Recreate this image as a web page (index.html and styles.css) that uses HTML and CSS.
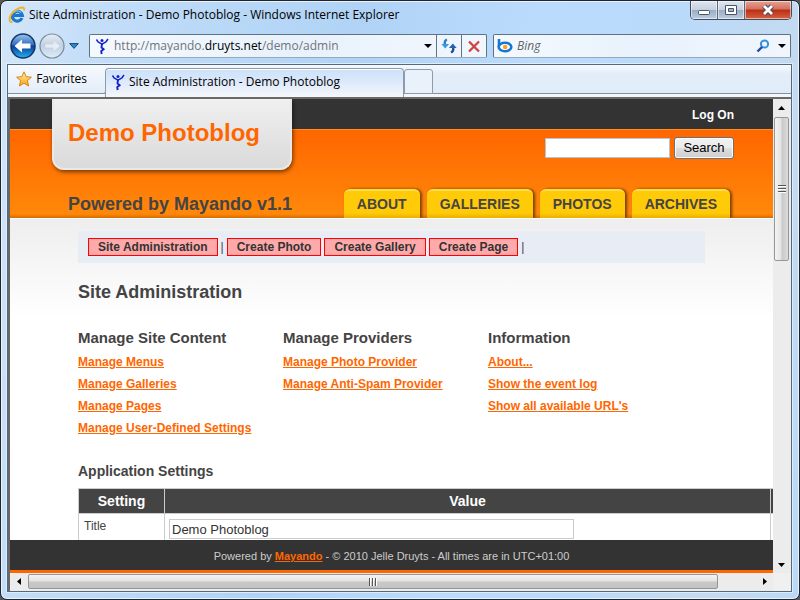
FILE: index.html
```html
<!DOCTYPE html>
<html lang="en">
<head>
<meta charset="utf-8">
<title>Site Administration - Demo Photoblog</title>
<link rel="stylesheet" href="styles.css">
</head>
<body>
<svg class="defs" aria-hidden="true">
  <defs>
    <symbol id="figure" viewBox="0 0 16 18">
      <circle cx="8" cy="3.600" r="1.500" fill="#1122cc"/>
      <path d="M2.500 2.500 L4 4.800 L8 7.200 L12 4.800 L14 2" fill="none" stroke="#1122cc" stroke-width="1.500" stroke-linejoin="round"/>
      <path d="M8 6.500 L7.500 10.500 L9.800 12.300 L7.200 14 L7.700 17" fill="none" stroke="#1122cc" stroke-width="1.900" stroke-linejoin="round"/>
    </symbol>
    <linearGradient id="orb" x1="0" y1="0" x2="0" y2="1">
      <stop offset="0" stop-color="#9cc6ee"/><stop offset=".45" stop-color="#2b6fc4"/><stop offset=".5" stop-color="#0a3b98"/><stop offset="1" stop-color="#25b4f2"/>
    </linearGradient>
    <linearGradient id="orb-off" x1="0" y1="0" x2="0" y2="1">
      <stop offset="0" stop-color="#e6eef7"/><stop offset=".5" stop-color="#bfd0e2"/><stop offset="1" stop-color="#dfeefa"/>
    </linearGradient>
    <linearGradient id="gold" x1="0" y1="0" x2="0" y2="1">
      <stop offset="0" stop-color="#fff3a0"/><stop offset="1" stop-color="#f9a01b"/>
    </linearGradient>
  </defs>
</svg>
<div class="window">
  <header class="titlebar">
    <svg class="ie" viewBox="0 0 18 18" aria-hidden="true">
      <path d="M14 12 A5 5 0 1 1 14.300 9.300 H5.500" fill="none" stroke="#1b78cc" stroke-width="3.200"/>
      <path d="M13 6.500 A5 5 0 0 0 5.500 6.500" fill="none" stroke="#7cc8f5" stroke-width="1.200"/>
      <path d="M4.500 16 C0 17 .5 9.500 7 4.500 C11.500 1 17.500 .2 16 4.500" fill="none" stroke="#f3b22c" stroke-width="2"/>
    </svg>
    <span class="caption">Site Administration - Demo Photoblog - Windows Internet Explorer</span>
    <div class="controls">
      <button class="ctl" aria-label="Minimize"><svg viewBox="0 0 14 14"><rect x="1.500" y="7.500" width="11" height="4" rx="1" fill="#fff" stroke="#4b5568"/></svg></button>
      <button class="ctl" aria-label="Maximize"><svg viewBox="0 0 14 14"><path d="M1.500 2.500h11v9h-11z" fill="#fff" stroke="#4b5568"/><path d="M4.500 5.500h5v3h-5z" fill="#9fb6d2" stroke="#4b5568"/></svg></button>
      <button class="ctl close" aria-label="Close"><svg viewBox="0 0 14 14"><path d="M3 3l8 8M11 3l-8 8" stroke="#4b4a5c" stroke-width="5"/><path d="M3 3l8 8M11 3l-8 8" stroke="#fff" stroke-width="2.800"/></svg></button>
    </div>
  </header>

  <nav class="toolbar" aria-label="Browser">
    <div class="history">
      <button class="orb" aria-label="Back"><svg viewBox="0 0 26 26"><circle cx="13" cy="13" r="12" fill="url(#orb)" stroke="#173462" stroke-width="1.500"/><path d="M4.500 13l7.500-6.500v4h8.500v5h-8.500v4z" fill="#fff"/></svg></button>
      <button class="orb" aria-label="Forward"><svg viewBox="0 0 26 26"><circle cx="13" cy="13" r="12" fill="url(#orb-off)" stroke="#7d8b9b" stroke-width="1.200"/><path d="M21.500 13l-7.500-6v4h-8v4h8v4z" fill="#e4ecf4" stroke="#c4d0dd" stroke-width=".6"/></svg></button>
      <button class="recent" aria-label="Recent pages"><svg viewBox="0 0 10 6"><path d="M.7.6h8.600L5 5.400z" fill="#2d8bc6" stroke="#12477b"/></svg></button>
    </div>
    <div class="address">
      <svg class="fav" aria-hidden="true"><use href="#figure"/></svg>
      <span class="url">http://mayando.<b>druyts.net</b>/demo/admin</span>
      <button class="drop" aria-label="Show addresses"><svg viewBox="0 0 8 4"><path d="M0 0h8L4 4z"/></svg></button>
      <button class="cell" aria-label="Refresh"><svg viewBox="0 0 16 16"><path d="M6 1.500C3.500 2.500 3.500 5 4 7" fill="none" stroke="#2b7cc4" stroke-width="2.400"/><path d="M.3 6h7.800L4.200 10.500z" fill="#3c9be0"/><path d="M10 14.500c2.500-1 2.500-3.500 2-5.500" fill="none" stroke="#1d4f9c" stroke-width="2.400"/><path d="M7.900 10h7.800L11.800 5.500z" fill="#2a62b0"/></svg></button>
      <button class="cell" aria-label="Stop"><svg viewBox="0 0 16 16"><path d="M3 3.500l10 10M13 3.500l-10 10" stroke="#cf4040" stroke-width="2.200"/></svg></button>
    </div>
    <div class="bing">
      <svg class="b" viewBox="0 0 18 16" aria-hidden="true"><path d="M3 1v8" stroke="#1577d4" stroke-width="2.600"/><ellipse cx="9" cy="9" rx="6.300" ry="4.300" fill="#fff" stroke="#1577d4" stroke-width="2.600"/><circle cx="9.200" cy="9" r="2.300" fill="#f9a21b"/></svg>
      <input type="search" placeholder="Bing" aria-label="Search with Bing">
      <button class="glass" aria-label="Search the web"><svg viewBox="0 0 14 14"><circle cx="8.500" cy="5" r="3.600" fill="#e8f5ff" stroke="#3a8fd8" stroke-width="2"/><path d="M6 8l-4.500 4.500" stroke="#2746a0" stroke-width="2.400"/></svg></button>
      <button class="drop" aria-label="Search options"><svg viewBox="0 0 8 4"><path d="M0 0h8L4 4z"/></svg></button>
    </div>
  </nav>

  <div class="frame">
    <div class="tabs">
      <button class="favorites"><svg viewBox="0 0 16 16" aria-hidden="true"><path d="M8 .8l2.200 4.900 5.200.5-4 3.500 1.200 5.300L8 12.200 3.400 15l1.200-5.300-4-3.500 5.200-.5z" fill="url(#gold)" stroke="#d5851c"/></svg>Favorites</button>
      <button class="tab"><svg class="fav" aria-hidden="true"><use href="#figure"/></svg>Site Administration - Demo Photoblog</button>
      <button class="newtab" aria-label="New tab"></button>
    </div>
    <div class="screen">
      <div class="viewport">
        <div class="masthead">
          <div class="brand">
            <h1>Demo Photoblog</h1>
            <p>Powered by Mayando v1.1</p>
          </div>
          <div class="side">
            <a class="logon" href="#">Log On</a>
            <form class="search">
              <input type="text" aria-label="Search the photoblog">
              <button type="button">Search</button>
            </form>
            <nav class="menu" aria-label="Main">
              <a href="#">ABOUT</a><a href="#">GALLERIES</a><a href="#">PHOTOS</a><a href="#">ARCHIVES</a>
            </nav>
          </div>
        </div>
        <main class="content">
          <nav class="admin" aria-label="Administration">
            <a href="#">Site Administration</a><span>|</span><a href="#">Create Photo</a><a href="#">Create Gallery</a><a href="#">Create Page</a><span>|</span>
          </nav>
          <h2>Site Administration</h2>
          <div class="columns">
            <section>
              <h3>Manage Site Content</h3>
              <ul>
                <li><a href="#">Manage Menus</a></li>
                <li><a href="#">Manage Galleries</a></li>
                <li><a href="#">Manage Pages</a></li>
                <li><a href="#">Manage User-Defined Settings</a></li>
              </ul>
            </section>
            <section>
              <h3>Manage Providers</h3>
              <ul>
                <li><a href="#">Manage Photo Provider</a></li>
                <li><a href="#">Manage Anti-Spam Provider</a></li>
              </ul>
            </section>
            <section>
              <h3>Information</h3>
              <ul>
                <li><a href="#">About...</a></li>
                <li><a href="#">Show the event log</a></li>
                <li><a href="#">Show all available URL's</a></li>
              </ul>
            </section>
          </div>
          <h3>Application Settings</h3>
          <table>
            <colgroup><col class="c-name"><col><col class="c-more"></colgroup>
            <thead><tr><th>Setting</th><th>Value</th><th></th></tr></thead>
            <tbody><tr><td><label for="title">Title</label></td><td><input id="title" type="text" value="Demo Photoblog"></td><td></td></tr></tbody>
          </table>
        </main>
        <footer>Powered by <a href="#">Mayando</a> - © 2010 Jelle Druyts - All times are in UTC+01:00</footer>
      </div>
      <div class="vbar">
        <button aria-label="Scroll up"><svg viewBox="0 0 7 4"><path d="M3.500 0L7 4H0z"/></svg></button>
        <div class="thumb"><i></i></div>
        <button class="end" aria-label="Scroll down"><svg viewBox="0 0 7 4"><path d="M0 0h7L3.500 4z"/></svg></button>
      </div>
      <div class="hbar">
        <button aria-label="Scroll left"><svg viewBox="0 0 4 7"><path d="M4 0v7L0 3.500z"/></svg></button>
        <div class="thumb"><i></i></div>
        <button class="end" aria-label="Scroll right"><svg viewBox="0 0 4 7"><path d="M0 0v7l4-3.500z"/></svg></button>
      </div>
      <div class="corner"></div>
    </div>
  </div>
</div>
</body>
</html>
```
FILE: styles.css
```css
* { box-sizing: border-box; }
html, body { height: 100%; margin: 0; }
body { background: #55565a; font: 12px/22px "Liberation Sans", Arial, sans-serif; color: #444; overflow: hidden; }
button { padding: 0; margin: 0; border: 0; background: none; font: inherit; color: inherit; display: flex; align-items: center; justify-content: center; flex: none; }
h1, h2, h3, p, ul { margin: 0; padding: 0; }
.defs { position: absolute; width: 0; height: 0; }

/* Browser window */
.window {
  height: 100vh; display: flex; flex-direction: column; padding: 0 7px 7px 6px;
  border: 1px solid #20242c; border-radius: 7px;
  background: linear-gradient(100deg, #d3e6f9 0, #c0dcf8 14%, #b0d3f5 40%, #badbfc 60%, #badafa 75%, #c4daf0 90%, #b9d9f9 100%);
  box-shadow: inset 0 0 0 1px #e8f4ff;
}
.titlebar, .toolbar, .tabs { font-family: "Open Sans", "Noto Sans", sans-serif; color: #000; }
.titlebar { display: flex; align-items: center; height: 28px; flex: none; }
.ie { width: 18px; height: 18px; margin: 0 3px 0 1px; }
.caption { flex: 1; white-space: nowrap; overflow: hidden; }
.controls { display: flex; align-self: flex-start; height: 19px; border: 1px solid #424c5c; border-top: 0; border-radius: 0 0 5px 5px; overflow: hidden; }
.ctl { width: 27px; border-right: 1px solid #5c6778; background: linear-gradient(#dfe7f0, #c5d1df 48%, #9aacc3 50%, #bccde0); box-shadow: inset 0 0 0 1px #ffffff88; }
.ctl svg { width: 14px; height: 14px; }
.ctl.close { width: 46px; border-right: 0; background: linear-gradient(#e8a294, #d4705c 45%, #b92f17 50%, #d9613c); }

.toolbar { display: flex; align-items: center; height: 35px; flex: none; padding: 0 1px 2px 3px; }
.history { display: flex; align-items: center; width: 79px; flex: none; }
.orb svg { width: 26px; height: 26px; }
.orb + .orb { margin-left: 3px; }
.recent { margin-left: 4px; }
.recent svg { width: 10px; height: 6px; }
.address, .bing { display: flex; align-items: center; height: 24px; border: 1px solid #5f7384; border-bottom-color: #98a9ba; border-radius: 2px; background: linear-gradient(90deg, #f4f9fe, #e8f2fc 50%, #f1f6fd); }
.address { flex: 4; min-width: 0; }
.address .fav { margin-left: 4px; }
.fav { width: 16px; height: 18px; flex: none; }
.url { flex: 1; margin-left: 4px; color: #707478; white-space: nowrap; overflow: hidden; }
.url b { font-weight: 400; color: #000; }
.drop { width: 17px; height: 22px; }
.drop svg { width: 8px; height: 4px; }
.cell { width: 25px; height: 22px; border-left: 1px solid #5f7384; }
.cell svg { width: 16px; height: 16px; }
.bing { flex: 3; min-width: 0; max-width: 298px; margin-left: 6px; padding-left: 2px; }
.b { width: 18px; height: 16px; flex: none; }
.bing input { flex: 1; min-width: 0; border: 0; padding: 0; margin-left: 3px; background: none; font: italic 12px "Open Sans", sans-serif; outline: 0; }
.bing input::placeholder { color: #606468; opacity: 1; }
.glass svg { width: 14px; height: 14px; margin-right: 3px; }

.frame { flex: 1; min-height: 0; display: flex; flex-direction: column; border: 1px solid #56687c; background: #f3f6fb; box-shadow: 0 0 0 1px #dcedfd; }
.tabs { display: flex; align-items: flex-end; height: 32px; flex: none; padding-bottom: 3px; background: linear-gradient(#f7fafd 0, #e2edf9 9px, #dfecf8 28px, #8590a0 28px, #8590a0 29px, #f3f6fb 29px); }
.favorites { align-self: stretch; width: 97px; gap: 4px; padding-right: 10px; background: linear-gradient(#f6fafd, #e3edf8); border-bottom: 1px solid #8590a0; border-radius: 0 0 3px 0; }
.favorites svg { width: 16px; height: 16px; }
.tab { width: 299px; height: 29px; margin-bottom: -3px; padding: 0 6px 2px 4px; gap: 3px; justify-content: flex-start; border: 1px solid #8f9aaa; border-bottom: 0; border-radius: 4px 4px 0 0; background: linear-gradient(#cbe1fa, #dfeafa 50%, #f5f7fb); box-shadow: inset 0 1px #fff; }
.newtab { width: 29px; height: 25px; border: 1px solid #8f9aaa; border-radius: 3px 3px 0 0; background: #e9f2fb; }

.screen { flex: 1; min-height: 0; display: grid; grid-template-columns: minmax(0, 1fr) 18px; grid-template-rows: minmax(0, 1fr) 18px; border: 2px solid #696969; border-width: 2px 0 0 2px; }
.viewport { display: flex; flex-direction: column; overflow: hidden; background: #fff; }

/* Scroll bars */
.vbar, .hbar { display: flex; background: #ececec; }
.vbar { flex-direction: column; align-items: center; padding: 0 2px 0 1px; }
.vbar button { height: 17px; width: 15px; }
.hbar button { width: 17px; height: 15px; }
.vbar svg { width: 7px; height: 4px; }
.hbar svg { width: 4px; height: 7px; }
.vbar .end { margin-top: auto; }
.hbar .end { margin-left: auto; }
.thumb { display: flex; align-items: center; justify-content: center; border: 1px solid #969696; border-radius: 2px; }
.vbar .thumb { width: 15px; height: 144px; flex: 0 1 144px; margin-top: 1px; background: linear-gradient(90deg, #f4f4f4, #e2e2e2 48%, #c8c8c8 52%, #dcdcdc); }
.hbar .thumb { height: 15px; width: 690px; flex: 0 1 690px; margin-left: 1px; background: linear-gradient(#f4f4f4, #e2e2e2 48%, #c8c8c8 52%, #c4c4c4); }
.hbar { padding-top: 1px; }
.thumb i { width: 8px; height: 8px; background: repeating-linear-gradient(#555 0 1px, #fff 1px 2px, transparent 2px 3px); }
.hbar .thumb i { background: repeating-linear-gradient(90deg, #555 0 1px, #fff 1px 2px, transparent 2px 3px); }
.corner { background: #f0f0f0; }

/* Photoblog header */
.masthead { flex: none; display: flex; height: 120px; border-bottom: 1px solid #fff; background: linear-gradient(#333 30px, #ff9020 30px, #ff9020 31px, #ff6600 31px, #ff880a 115px, #d66b00 119px); }
.brand { margin-left: 42px; }
.brand h1 { width: 240px; height: 71px; padding: 0 14px; border: 2px solid #e9e9e9; border-width: 0 2px 2px; border-radius: 0 0 12px 12px; background: linear-gradient(#f0f0f0, #dadada); box-shadow: 1px 2px 4px #0008; font-size: 24px; line-height: 68px; color: #f60; white-space: nowrap; }
.brand p { padding-left: 16px; margin-top: 22px; font-size: 18px; font-weight: 700; line-height: 24px; white-space: nowrap; }
.side { flex: 1; display: flex; flex-direction: column; align-items: flex-end; padding-right: 39px; }
.logon { height: 30px; line-height: 32px; font-weight: 700; color: #fff; text-decoration: none; }
.search { display: flex; gap: 4px; margin-top: 8px; align-items: center; }
.search input { width: 125px; height: 20px; border: 1px solid #b9c3cc; padding: 0 2px; }
.search button { width: 60px; height: 22px; border: 1px solid #707070; border-radius: 3px; background: linear-gradient(#f2f2f2, #ebebeb 48%, #dddddd 52%, #cfcfcf); box-shadow: inset 0 0 0 1px #fcfcfc; font-size: 13px; color: #000; }
.menu { display: flex; gap: 7px; margin: auto 4px 0 0; }
.menu a { height: 29px; padding: 0 13px; border: 1px solid #ffde4a; border-width: 2px 0 0; border-radius: 6px 6px 0 0; background: linear-gradient(#ffca08 22px, #eab000); box-shadow: 2px 0 3px #0008; clip-path: inset(-3px -6px 0 -3px); font-size: 14px; font-weight: 700; line-height: 27px; color: #444; text-decoration: none; }

/* Page body */
.content { flex: 1; min-height: 0; overflow: hidden; padding: 12px 68px 0; background: linear-gradient(#eee, #fff 100px); }
.admin { display: flex; align-items: center; gap: 3px; height: 32px; padding: 0 10px; background: #e8edf5; white-space: nowrap; }
.admin a { height: 18px; padding: 0 9px; border: 1px solid #f00; background: #faa; font-weight: 700; line-height: 16px; color: #333; text-decoration: none; }
h2 { margin-top: 17px; font-size: 18px; line-height: 24px; }
.columns { display: grid; grid-template-columns: repeat(3, 205px); margin: 23px 0 21px; }
h3 { font-size: 14px; line-height: 22px; }
.columns h3 { margin-bottom: 2px; font-size: 15px; }
ul { list-style: none; }
.columns a, footer a { font-weight: 700; color: #f60; }
table { width: calc(100% + 150px); margin-top: 6px; border-collapse: collapse; table-layout: fixed; }
.c-name { width: 86px; }
.c-more { width: 84px; }
th { height: 25px; padding: 0; background: #444; color: #fff; font-size: 14px; line-height: 24px; }
th, td { border: 1px solid #ccc; }
td { height: 40px; padding: 5px 4px; vertical-align: top; line-height: 14px; }
td:first-child { padding-left: 5px; }
td input { display: block; width: 405px; height: 20px; padding: 0 2px; border: 1px solid #ccc; font: 13px "Liberation Sans", Arial, sans-serif; color: #333; }
footer { flex: none; height: 33px; border-bottom: 3px solid #f60; background: #333; color: #ccc; font-size: 11px; line-height: 32px; text-align: center; }
```
